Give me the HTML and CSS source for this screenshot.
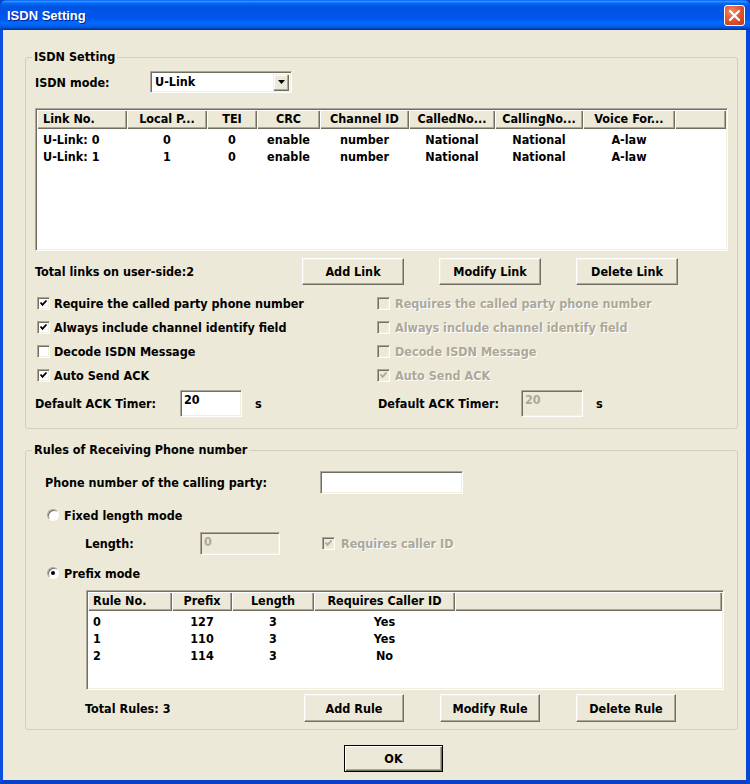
FILE: index.html
```html
<!DOCTYPE html>
<html>
<head>
<meta charset="utf-8">
<title>ISDN Setting</title>
<link rel="stylesheet" href="styles.css">
</head>
<body>
<div class="window">
  <div class="titlebar">
    <span class="title">ISDN Setting</span>
    <div class="close"><svg width="13" height="13" viewBox="0 0 13 13"><path d="M2 2 L11 11 M11 2 L2 11" stroke="#fff" stroke-width="2.2" stroke-linecap="round"/></svg></div>
  </div>
  <div class="client">
    <fieldset class="group g1">
      <legend>ISDN Setting</legend>
      <div class="mode-row">
        <span class="mode-lbl">ISDN mode:</span>
        <div class="combo"><span class="combo-text">U-Link</span><span class="drop"><svg width="7" height="4" viewBox="0 0 7 4"><path d="M0 0 H7 L3.5 4 Z" fill="#000"/></svg></span></div>
      </div>
      <div class="list links">
        <div class="lhead">
          <div class="hc left c1">Link No.</div>
          <div class="hc c2">Local P...</div>
          <div class="hc c3">TEI</div>
          <div class="hc c4">CRC</div>
          <div class="hc c5">Channel ID</div>
          <div class="hc c6">CalledNo...</div>
          <div class="hc c7">CallingNo...</div>
          <div class="hc c8">Voice For...</div>
          <div class="hc crest"></div>
        </div>
        <div class="lbody">
          <div class="lrow"><span class="left c1">U-Link: 0</span><span class="c2">0</span><span class="c3">0</span><span class="c4">enable</span><span class="c5">number</span><span class="c6">National</span><span class="c7">National</span><span class="c8">A-law</span></div>
          <div class="lrow"><span class="left c1">U-Link: 1</span><span class="c2">1</span><span class="c3">0</span><span class="c4">enable</span><span class="c5">number</span><span class="c6">National</span><span class="c7">National</span><span class="c8">A-law</span></div>
        </div>
      </div>
      <div class="btn-row">
        <span class="total-links">Total links on user-side:2</span>
        <button class="btn link-btn">Add Link</button>
        <button class="btn link-btn">Modify Link</button>
        <button class="btn link-btn">Delete Link</button>
      </div>
      <div class="checks">
        <div class="ccol lcol">
          <div class="crow"><span class="cb"><svg width="9" height="9" viewBox="0 0 9 9"><path d="M1.5 3.5 L3.5 5.8 L7.5 1.5" fill="none" stroke="#000" stroke-width="1.8"/></svg></span><span class="ctext">Require the called party phone number</span></div>
          <div class="crow"><span class="cb"><svg width="9" height="9" viewBox="0 0 9 9"><path d="M1.5 3.5 L3.5 5.8 L7.5 1.5" fill="none" stroke="#000" stroke-width="1.8"/></svg></span><span class="ctext">Always include channel identify field</span></div>
          <div class="crow"><span class="cb"></span><span class="ctext">Decode ISDN Message</span></div>
          <div class="crow"><span class="cb"><svg width="9" height="9" viewBox="0 0 9 9"><path d="M1.5 3.5 L3.5 5.8 L7.5 1.5" fill="none" stroke="#000" stroke-width="1.8"/></svg></span><span class="ctext">Auto Send ACK</span></div>
          <div class="timer-row">
            <span class="timer-lbl">Default ACK Timer:</span>
            <span class="field timer-in">20</span>
            <span class="unit">s</span>
          </div>
        </div>
        <div class="ccol rcol">
          <div class="crow dis"><span class="cb off"></span><span class="ctext">Requires the called party phone number</span></div>
          <div class="crow dis"><span class="cb off"></span><span class="ctext">Always include channel identify field</span></div>
          <div class="crow dis"><span class="cb off"></span><span class="ctext">Decode ISDN Message</span></div>
          <div class="crow dis"><span class="cb off"><svg width="9" height="9" viewBox="0 0 9 9"><path d="M1.5 3.5 L3.5 5.8 L7.5 1.5" fill="none" stroke="#ACA899" stroke-width="1.8"/></svg></span><span class="ctext">Auto Send ACK</span></div>
          <div class="timer-row">
            <span class="timer-lbl r">Default ACK Timer:</span>
            <span class="field disabled timer-in">20</span>
            <span class="unit">s</span>
          </div>
        </div>
      </div>
    </fieldset>

    <fieldset class="group g2">
      <legend>Rules of Receiving Phone number</legend>
      <div class="phone-row">
        <span class="phone-lbl">Phone number of the calling party:</span>
        <span class="field phone-in"></span>
      </div>
      <div class="radio-row first"><span class="radio"></span><span class="rtext">Fixed length mode</span></div>
      <div class="len-row">
        <span class="len-lbl">Length:</span>
        <span class="field disabled len-in">0</span>
        <span class="cb off len-cb"><svg width="9" height="9" viewBox="0 0 9 9"><path d="M1.5 3.5 L3.5 5.8 L7.5 1.5" fill="none" stroke="#ACA899" stroke-width="1.8"/></svg></span>
        <span class="dis-text len-text">Requires caller ID</span>
      </div>
      <div class="radio-row second"><span class="radio on"><span class="dot"></span></span><span class="rtext">Prefix mode</span></div>
      <div class="list rules">
        <div class="lhead">
          <div class="hc left r1">Rule No.</div>
          <div class="hc r2">Prefix</div>
          <div class="hc r3">Length</div>
          <div class="hc r4">Requires Caller ID</div>
          <div class="hc crest"></div>
        </div>
        <div class="lbody">
          <div class="lrow"><span class="left r1">0</span><span class="r2">127</span><span class="r3">3</span><span class="r4">Yes</span></div>
          <div class="lrow"><span class="left r1">1</span><span class="r2">110</span><span class="r3">3</span><span class="r4">Yes</span></div>
          <div class="lrow"><span class="left r1">2</span><span class="r2">114</span><span class="r3">3</span><span class="r4">No</span></div>
        </div>
      </div>
      <div class="rules-bottom">
        <span class="total-rules">Total Rules: 3</span>
        <button class="btn rule-btn">Add Rule</button>
        <button class="btn rule-btn">Modify Rule</button>
        <button class="btn rule-btn">Delete Rule</button>
      </div>
    </fieldset>

    <div class="footer">
      <button class="btn ok">OK</button>
    </div>
  </div>
</div>
</body>
</html>
```
FILE: styles.css
```css
* { box-sizing: border-box; margin: 0; padding: 0; }
html, body { width: 750px; height: 784px; overflow: hidden; background: #0A45C8; }
body {
  font-family: "DejaVu Sans Condensed", "DejaVu Sans", sans-serif;
  font-stretch: semi-condensed;
  font-weight: bold;
  font-size: 12.5px;
  color: #000;
}
.window { width: 750px; height: 784px; display: flex; flex-direction: column; }
.titlebar {
  height: 30px;
  flex: none;
  display: flex;
  align-items: center;
  justify-content: space-between;
  padding: 0 5px 0 7px;
  border-radius: 7px 7px 0 0;
  background: linear-gradient(to bottom, #0058EE 0%, #3593FF 4%, #288EFF 6%, #127DFF 8%, #036FFC 10%, #0262EE 14%, #0057E5 20%, #0054E3 24%, #0055EB 56%, #005BF5 66%, #026AFE 76%, #0062EF 86%, #0052D6 92%, #0040AB 96%, #003092 100%);
}
.title {
  color: #fff;
  font-family: "Liberation Sans", sans-serif;
  font-size: 13px;
  font-weight: bold;
  text-shadow: 1px 1px #0A1E8C;
  margin-top: 1px;
}
.close {
  width: 21px;
  height: 21px;
  border: 1px solid #fff;
  border-radius: 3px;
  background: radial-gradient(circle at 35% 30%, #F08A6B 0%, #E0532E 50%, #C2391A 100%);
  display: flex;
  align-items: center;
  justify-content: center;
}
.client {
  flex: 1;
  background: #ECE9D8;
  border-style: solid;
  border-color: #0A4FE0 #0A47D8 #0A3FC8 #0A4FE0;
  border-width: 0 4px 4px 3px;
  display: flex;
  flex-direction: column;
}

/* group boxes */
.group {
  border: 1px solid #D0D0BF;
  border-radius: 3px;
  margin: 20px 8px 0 22px;
}
.group legend {
  padding: 0 2px;
  line-height: 14px;
}
.g1 { padding: 7px 9px 11px 9px; }
.g1 legend { margin-left: -3px; }
.g2 { margin-top: 14px; padding: 14px 9px 7px 19px; }
.g2 legend { margin-left: -13px; }

/* sunken fields */
.field {
  display: flex;
  align-items: flex-start;
  background: #fff;
  border: 1px solid;
  border-color: #ACA899 #fff #fff #ACA899;
  box-shadow: inset 1px 1px #716F64, inset -1px -1px #F1EFE2;
  padding: 1px 3px;
  line-height: 16px;
}
.field.disabled { background: #ECE9D8; color: #ACA899; }

/* combo */
.mode-row { display: flex; align-items: center; height: 22px; }
.mode-lbl { width: 115px; }
.combo {
  width: 142px;
  height: 22px;
  background: #fff;
  border: 1px solid;
  border-color: #ACA899 #fff #fff #ACA899;
  box-shadow: inset 1px 1px #716F64, inset -1px -1px #F1EFE2;
  display: flex;
  align-items: center;
  justify-content: space-between;
  padding: 2px 2px 2px 4px;
}
.combo-text { line-height: 16px; }
.drop {
  width: 16px;
  height: 17px;
  background: #ECE9D8;
  box-shadow: inset 1px 1px #F1EFE2, inset -1px -1px #716F64, inset -2px -2px #ACA899, inset 2px 2px #fff;
  display: flex;
  align-items: center;
  justify-content: center;
}

/* list views */
.list {
  background: #fff;
  border: 1px solid;
  border-color: #ACA899 #fff #fff #ACA899;
  box-shadow: inset 1px 1px #716F64, inset -1px -1px #F1EFE2;
  padding: 1px;
  display: flex;
  flex-direction: column;
}
.links { margin-top: 15px; height: 143px; }
.lhead { display: flex; height: 19px; flex: none; }
.hc {
  height: 19px;
  background: #ECE9D8;
  box-shadow: inset 1px 1px #fff, inset -1px -1px #716F64, inset -2px -2px #ACA899;
  text-align: center;
  line-height: 18px;
  white-space: nowrap;
  overflow: hidden;
}
.hc.crest { flex: 1; }
.lbody { padding-top: 2px; }
.lrow { display: flex; height: 17px; line-height: 17px; }
.lrow span { text-align: center; white-space: nowrap; }
.left { text-align: left !important; padding-left: 6px; }
.c1 { width: 90px; flex: none; }
.c2 { width: 80px; flex: none; }
.c3 { width: 50px; flex: none; }
.c4 { width: 63px; flex: none; }
.c5 { width: 89px; flex: none; }
.c6 { width: 86px; flex: none; }
.c7 { width: 88px; flex: none; }
.c8 { width: 92px; flex: none; }

.r1 { width: 84px; flex: none; }
.r2 { width: 60px; flex: none; }
.r3 { width: 82px; flex: none; }
.r4 { width: 141px; flex: none; }
.rules .left { padding-left: 5px; }

/* buttons */
.btn {
  font: inherit;
  color: #000;
  background: #ECE9D8;
  border: 1px solid;
  border-color: #fff #716F64 #716F64 #fff;
  box-shadow: inset -1px -1px #ACA899, inset 1px 1px #F1EFE2;
  height: 27px;
  text-align: center;
}
.btn-row { margin-top: 7px; display: flex; align-items: center; height: 27px; gap: 35px; }
.total-links { width: 232px; }
.link-btn { width: 102px; }

/* checkboxes */
.checks { margin-top: 6px; display: flex; }
.lcol { width: 341px; flex: none; }
.rcol { flex: 1; }
.crow { display: flex; align-items: center; height: 24px; }
.cb {
  width: 13px;
  height: 13px;
  flex: none;
  margin-left: 2px;
  background: #fff;
  border: 1px solid;
  border-color: #ACA899 #fff #fff #ACA899;
  box-shadow: inset 1px 1px #716F64, inset -1px -1px #F1EFE2;
  display: flex;
  align-items: center;
  justify-content: center;
}
.cb.off { background: #ECE9D8; }
.ctext { margin-left: 4px; white-space: nowrap; }
.crow.dis .ctext, .dis-text { color: #ACA899; text-shadow: 1px 1px #fff; }
.rcol .cb { margin-left: 1px; }
.rcol .ctext { margin-left: 5px; }

.timer-row { margin-top: 3px; display: flex; align-items: center; height: 27px; }
.timer-lbl { width: 145px; }
.timer-lbl.r { width: 145px; padding-left: 2px; }
.timer-in { width: 62px; height: 27px; }
.unit { margin-left: 13px; }

/* group 2 */
.phone-row { display: flex; align-items: center; height: 23px; }
.phone-lbl { width: 275px; }
.phone-in { width: 143px; height: 23px; }
.radio-row { display: flex; align-items: center; height: 24px; }
.radio-row.first { margin-top: 9px; }
.radio-row.second { margin-top: 6px; }
.radio {
  width: 12px;
  height: 12px;
  margin-left: 2px;
  border-radius: 50%;
  background: #fff;
  border: 1px solid;
  border-color: #ACA899 #fff #fff #ACA899;
  box-shadow: inset 1px 1px #716F64;
  display: flex;
  align-items: center;
  justify-content: center;
}
.dot { width: 4px; height: 4px; border-radius: 50%; background: #000; }
.rtext { margin-left: 5px; }
.len-row { margin-top: 5px; display: flex; align-items: center; height: 23px; padding-left: 40px; }
.len-lbl { width: 115px; }
.len-in { width: 80px; height: 23px; }
.len-cb { margin-left: 42px; }
.len-text { margin-left: 6px; }

.rules { margin-top: 5px; margin-left: 41px; width: 638px; height: 100px; }
.rules-bottom { margin-top: 4px; display: flex; align-items: center; height: 28px; padding-left: 40px; gap: 36px; }
.total-rules { width: 183px; }
.rule-btn { width: 100px; height: 28px; }

.footer { margin-top: 15px; padding-left: 341px; }
.ok {
  width: 99px;
  height: 27px;
  border: 1px solid #000;
  box-shadow: inset 1px 1px #fff, inset -1px -1px #716F64, inset -2px -2px #ACA899;
}
```
